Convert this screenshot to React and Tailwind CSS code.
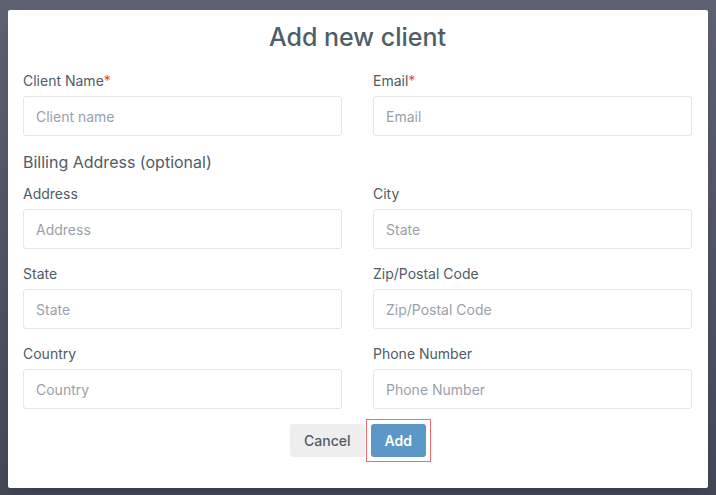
import React from 'react';

const Field = ({ label, placeholder, required }) => (
  <div className="flex flex-col">
    <label className="text-[14px] leading-[21px] text-[#4f5b66] mb-[5px]">
      {label}
      {required && <span className="text-[#ef4444]">*</span>}
    </label>
    <input
      type="text"
      placeholder={placeholder}
      className="h-[40px] w-full rounded-[3px] border border-[#e3e6ea] bg-white px-[12px] text-[14px] text-[#4f5b66] placeholder:text-[#9aa1a9] outline-none"
    />
  </div>
);

const App = () => {
  const billing = [
    { label: 'Address', placeholder: 'Address' },
    { label: 'City', placeholder: 'State' },
    { label: 'State', placeholder: 'State' },
    { label: 'Zip/Postal Code', placeholder: 'Zip/Postal Code' },
    { label: 'Country', placeholder: 'Country' },
    { label: 'Phone Number', placeholder: 'Phone Number' },
  ];

  return (
    <div
      className="h-[495px] w-[716px] bg-gradient-to-b from-[#5e6172] to-[#444756] pl-[8px] pt-[10px]"
      style={{ fontFamily: 'Inter, "Open Sans", sans-serif' }}
    >
      <div className="h-[478px] w-[700px] rounded-[2px] bg-white pl-[15px] pr-[16px] pt-[8px] shadow-lg">
        <h2 className="text-center text-[25px] leading-[39px] font-medium text-[#4f5d68] mb-[13px]">
          Add new client
        </h2>

        <div className="grid grid-cols-2 gap-x-[31px]">
          <Field label="Client Name" placeholder="Client name" required />
          <Field label="Email" placeholder="Email" required />
        </div>

        <h3 className="mt-[14px] mb-[9px] text-[16px] leading-[24px] text-[#4f5b66]">
          Billing Address (optional)
        </h3>

        <div className="grid grid-cols-2 gap-x-[31px] gap-y-[14px]">
          {billing.map((f, i) => (
            <Field key={i} label={f.label} placeholder={f.placeholder} />
          ))}
        </div>

        <div className="mt-[10px] flex items-center justify-center gap-[1px] pl-[6px]">
          <button className="h-[33px] rounded-[3px] bg-[#eeeeee] px-[14px] text-[14px] font-medium text-[#4f5b66]">
            Cancel
          </button>
          <div className="p-[1px]">
            <div className="outline outline-1 outline-[#f06b6b] p-[4px]">
              <button className="block h-[33px] rounded-[3px] bg-[#5b97c7] px-[14px] text-[14px] font-semibold text-white">
                Add
              </button>
            </div>
          </div>
        </div>
      </div>
    </div>
  );
};

export default App;
